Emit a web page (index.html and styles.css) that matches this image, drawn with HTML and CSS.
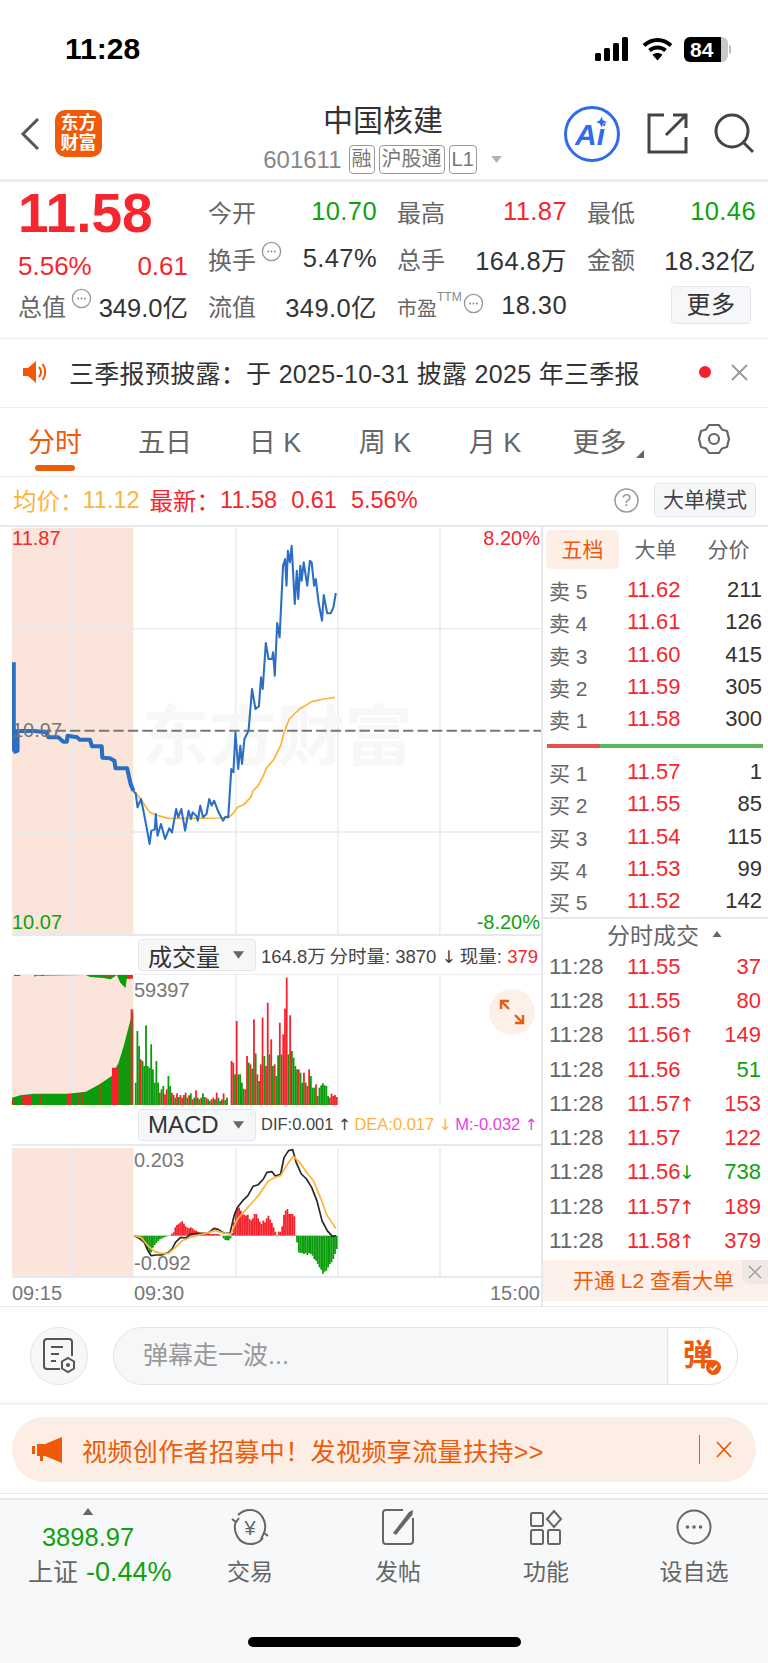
FILE: index.html
```html
<!DOCTYPE html>
<html lang="zh-CN">
<head>
    <meta charset="UTF-8">
    <title>中国核建</title>
    <link rel="stylesheet" href="styles.css">
</head>
<body>
<svg class="defs" width="0" height="0">
    <symbol id="dots" viewBox="0 0 22 22">
        <circle cx="11" cy="11" r="9.5" fill="none" stroke="#999" stroke-width="1.4"/>
        <circle cx="7.5" cy="11" r="1" fill="#888"/><circle cx="11" cy="11" r="1" fill="#888"/><circle cx="14.5" cy="11" r="1" fill="#888"/>
    </symbol>
    <symbol id="caret" viewBox="0 0 12 8"><path d="M0 0H12L6 8Z" fill="#666"/></symbol>
</svg>
<div class="page">
    <!-- 状态栏 -->
    <div class="status">
        <span class="clock">11:28</span>
        <div class="status-icons">
            <svg width="35" height="24" viewBox="0 0 35 24"><rect x="0" y="16" width="6" height="8" rx="1.5"/><rect x="9" y="11" width="6" height="13" rx="1.5"/><rect x="18" y="6" width="6" height="18" rx="1.5"/><rect x="27" y="0" width="6" height="24" rx="1.5"/></svg>
            <svg width="31" height="24" viewBox="0 0 31 24"><path d="M2 8.5C10 1 21 1 29 8.5" fill="none" stroke="#000" stroke-width="4"/><path d="M7.5 13.5C12 9.5 19 9.5 23.5 13.5" fill="none" stroke="#000" stroke-width="4"/><path d="M15.5 23.5L10.5 17.8C13.5 15.5 17.5 15.5 20.5 17.8Z"/></svg>
            <div class="battery">84</div>
            <div class="battery-nub"></div>
        </div>
    </div>

    <!-- 标题栏 -->
    <div class="nav">
        <svg class="back" width="20" height="34" viewBox="0 0 20 34"><path d="M18 2L3 17L18 32" fill="none" stroke="#555" stroke-width="3"/></svg>
        <div class="logo">东方<br>财富</div>
        <div class="nav-title">
            <div class="stock-name">中国核建</div>
            <div class="stock-sub">
                <span class="stock-code">601611</span>
                <span class="tag">融</span><span class="tag">沪股通</span><span class="tag">L1</span>
                <svg class="sub-caret" width="13" height="7"><use href="#caret"/></svg>
            </div>
        </div>
        <div class="nav-actions">
            <svg width="58" height="58" viewBox="0 0 58 58"><circle cx="29" cy="29" r="26.5" fill="none" stroke="#2f6bea" stroke-width="3"/><text x="12" y="40" class="ai-text">Ai</text><path d="M38.500 11L40.300 15.200L44.500 17L40.300 18.800L38.500 23L36.700 18.800L32.500 17L36.700 15.200Z" fill="#2f6bea" stroke="#fff" stroke-width="0.600"/></svg>
            <svg width="41" height="41" viewBox="0 0 41 41"><path d="M17 2H2V39H39V24M26 2H39V15M39 2L19 22" fill="none" stroke="#444" stroke-width="3"/></svg>
            <svg width="41" height="41" viewBox="0 0 41 41"><circle cx="18" cy="18" r="16" fill="none" stroke="#444" stroke-width="3"/><path d="M30 30L39 39" stroke="#444" stroke-width="3"/></svg>
        </div>
    </div>

    <!-- 行情 -->
    <div class="quote">
        <div class="last-price">11.58</div>
        <div class="cell"><span class="lbl">今开</span><span class="green">10.70</span></div>
        <div class="cell"><span class="lbl">最高</span><span class="red">11.87</span></div>
        <div class="cell"><span class="lbl">最低</span><span class="green">10.46</span></div>

        <div class="cell change red"><span>5.56%</span><span>0.61</span></div>
        <div class="cell"><span class="lbl">换手<svg class="tip" width="21" height="21"><use href="#dots"/></svg></span><span>5.47%</span></div>
        <div class="cell"><span class="lbl">总手</span><span>164.8万</span></div>
        <div class="cell"><span class="lbl">金额</span><span>18.32亿</span></div>

        <div class="cell"><span class="lbl">总值<svg class="tip" width="21" height="21"><use href="#dots"/></svg></span><span class="tight">349.0亿</span></div>
        <div class="cell"><span class="lbl">流值</span><span>349.0亿</span></div>
        <div class="cell"><span class="lbl"><small>市盈</small><sup>TTM</sup><svg class="tip tip-ttm" width="21" height="21"><use href="#dots"/></svg></span><span>18.30</span></div>
        <div class="cell more-cell"><span class="more-btn">更多</span></div>
    </div>

    <!-- 公告 -->
    <div class="notice">
        <svg width="26" height="26" viewBox="0 0 26 26"><path d="M1 9H6L14 2V24L6 17H1Z" fill="#f0590a"/><path d="M17 8C19.500 11 19.500 15 17 18M20.500 5C24 10 24 16 20.500 21" fill="none" stroke="#f0590a" stroke-width="2"/></svg>
        <span class="notice-text">三季报预披露：于 2025-10-31 披露 2025 年三季报</span>
        <span class="notice-dot"></span>
        <svg width="17" height="17" viewBox="0 0 17 17"><path d="M1 1L16 16M16 1L1 16" stroke="#999" stroke-width="1.8"/></svg>
    </div>

    <!-- 周期切换 -->
    <div class="tabs">
        <div class="tab active">分时</div>
        <div class="tab">五日</div>
        <div class="tab">日 K</div>
        <div class="tab">周 K</div>
        <div class="tab">月 K</div>
        <div class="tab tab-more">更多<i class="corner"></i></div>
        <div class="tab-gear">
            <svg width="34" height="34" viewBox="0 0 34 34"><path d="M12 3H22L25 7.500L30 9L32 17L30 25L25 26.500L22 31H12L9 26.500L4 25L2 17L4 9L9 7.500Z" fill="none" stroke="#666" stroke-width="2.200" stroke-linejoin="round"/><circle cx="17" cy="17" r="5" fill="none" stroke="#666" stroke-width="2.200"/></svg>
        </div>
    </div>

    <!-- 均价行 -->
    <div class="info">
        <span class="yellow info-avg">均价：</span><span class="yellow info-avg-val">11.12</span>
        <span class="red info-new">最新：</span><span class="red">11.58</span><span class="red">0.61</span><span class="red">5.56%</span>
        <svg class="help" width="25" height="25" viewBox="0 0 25 25"><circle cx="12.500" cy="12.500" r="11.500" fill="none" stroke="#999" stroke-width="1.500"/><text x="12.500" y="18" text-anchor="middle" class="help-text">?</text></svg>
        <span class="mode-btn">大单模式</span>
    </div>

    <div class="market">
        <div class="charts">
            <div class="price-chart">
                <svg class="chart-svg" viewBox="36 24 1534 1221" preserveAspectRatio="none">
                    <rect x="36" y="26" width="352" height="1219" fill="#fbe5da"/>
                    <path d="M36 329H1570M36 939H1570M212 26V1245M685 26V1245M981 26V1245M1277 26V1245" stroke="#e7e9f0" stroke-width="4" fill="none"/>
                    <text x="410" y="722" class="watermark">东方财富</text>
                    <path d="M36 635H1570" stroke="#777" stroke-width="6" stroke-dasharray="30 12" fill="none"/>
                    <polyline class="line-thick" points="41,430 41,690 45,698 52,695 52,636 100,636 135,640 142,655 170,655 185,668 195,668 197,650 225,655 232,662 262,662 268,682 296,682 298,716 320,718 333,725 336,748 370,748 375,772 380,795 388,815"/>
                    <polyline class="line-avg" points="395,820 415,850 435,880 460,890 490,898 520,898 560,898 640,897 665,895 680,880 690,865 708,857 728,835 735,815 750,800 765,770 775,745 795,722 815,680 825,640 840,600 870,570 905,548 940,540 972,535"/>
                    <polyline class="line-price" points="388,815 395,825 400,865 410,840 418,880 428,935 435,975 440,935 450,932 453,885 458,950 468,915 480,960 492,928 500,940 512,870 518,895 527,870 538,935 548,875 555,900 560,880 570,890 575,905 582,860 590,895 600,885 608,840 615,860 622,845 635,880 648,905 655,893 663,895 672,750 678,760 684,640 692,750 698,680 703,735 710,660 722,635 732,510 742,570 752,562 758,475 763,510 772,372 780,420 790,420 793,400 798,470 805,312 812,355 822,140 828,120 832,200 836,95 842,130 847,80 856,255 862,155 866,240 872,140 876,185 882,130 892,200 900,125 905,130 912,200 917,180 925,250 935,305 940,228 950,283 960,283 968,265 975,222"/>
                </svg>
                <span class="axis top-left">11.87</span>
                <span class="axis top-right">8.20%</span>
                <span class="axis mid-left">10.97</span>
                <span class="axis bottom-left">10.07</span>
                <span class="axis bottom-right">-8.20%</span>
            </div>

            <div class="ind-head">
                <div class="ind-select">成交量<svg width="11" height="8"><use href="#caret"/></svg></div>
                <div class="ind-vals vol-vals"><span>164.8万</span><span>分时量: 3870 <i>↓</i></span><span>现量: <b class="red">379</b></span></div>
            </div>
            <div class="vol-chart">
                <svg id="volSvg" class="chart-svg" viewBox="36 137 1534 390" preserveAspectRatio="none">
                    <rect x="36" y="137" width="352" height="390" fill="#fbe5da"/>
                    <path d="M212 137V527M685 137V527M981 137V527M1277 137V527" stroke="#e7e9f0" stroke-width="4" fill="none"/>
                    <path d="M36 527V505L60 498L100 493H200L250 487L290 465L325 440L345 400L360 350L375 290L388 240V527Z" fill="#0a9c0a"/>
                    <path d="M36 527V512H42V527ZM66 527V500H92V527ZM118 527V495H122V527ZM195 527V493H210V527ZM225 527V490H229V527ZM240 527V488H243V527ZM290 527V465H293V527ZM326 527V415H345V527ZM364 527V350H367V527ZM380 527V240H386V527Z" fill="#f5222d"/>
                    <path d="M60 137H100L102 143L106 139L250 137L262 143L300 146L322 150L340 137L350 160L365 176L369 148L386 146V137Z" fill="#0a9c0a"/>
                    <path d="M42 137H60V140H42ZM120 137H128V140H120ZM310 137H320V143H310ZM372 137H386V148H372Z" fill="#f5222d"/>
                </svg>
                <span class="axis vol-max">59397</span>
                <div class="expand-btn">
                    <svg width="26" height="26" viewBox="0 0 26 26"><path d="M2 10V2H10M2 2L10 10M24 16V24H16M24 24L16 16" fill="none" stroke="#f0590a" stroke-width="2.400"/></svg>
                </div>
            </div>

            <div class="ind-head macd-head">
                <div class="ind-select">MACD<svg width="11" height="8"><use href="#caret"/></svg></div>
                <div class="ind-vals macd-vals"><span>DIF:0.001 <i>↑</i></span><span class="yellow">DEA:0.017 <i>↓</i></span><span class="magenta">M:-0.032 <i>↑</i></span></div>
            </div>
            <div class="macd-chart">
                <svg id="macdSvg" class="chart-svg" viewBox="36 141 1534 390" preserveAspectRatio="none">
                    <rect x="36" y="147" width="352" height="384" fill="#fbe5da"/>
                    <path d="M212 147V531M685 147V531M981 147V531M1277 147V531" stroke="#e7e9f0" stroke-width="4" fill="none"/>
                    <g id="macdBars"></g>
                    <polyline class="line-dif" points="390,410 405,418 420,430 430,455 440,470 455,468 470,468 490,460 500,450 510,430 525,415 540,417 555,405 580,403 605,402 622,388 635,392 650,402 668,403 680,350 690,325 705,305 720,290 735,262 750,257 765,240 775,220 790,218 800,232 815,225 825,175 838,155 850,152 860,190 875,225 890,240 905,265 920,305 935,365 950,395 965,412 975,410"/>
                    <polyline class="line-dea" points="390,410 410,415 430,440 450,458 470,463 490,463 510,445 530,425 560,412 590,405 625,395 650,402 670,405 690,360 720,325 750,290 780,245 800,235 815,230 835,195 852,172 870,190 890,220 910,245 930,295 950,350 975,388"/>
                </svg>
                <span class="axis macd-max">0.203</span>
                <span class="axis macd-min">-0.092</span>
            </div>

            <div class="time-axis">
                <span class="t-start">09:15</span><span class="t-open">09:30</span><span class="t-end">15:00</span>
            </div>
        </div>

        <!-- 五档 -->
        <div class="side">
            <div class="side-tabs">
                <span class="side-tab active">五档</span><span class="side-tab">大单</span><span class="side-tab">分价</span>
            </div>
            <div class="book">
                <div class="book-row"><span>卖 5</span><span class="red">11.62</span><b>211</b></div>
                <div class="book-row"><span>卖 4</span><span class="red">11.61</span><b>126</b></div>
                <div class="book-row"><span>卖 3</span><span class="red">11.60</span><b>415</b></div>
                <div class="book-row"><span>卖 2</span><span class="red">11.59</span><b>305</b></div>
                <div class="book-row"><span>卖 1</span><span class="red">11.58</span><b>300</b></div>
            </div>
            <div class="ratio"><div class="ratio-red"></div></div>
            <div class="book book-buy">
                <div class="book-row"><span>买 1</span><span class="red">11.57</span><b>1</b></div>
                <div class="book-row"><span>买 2</span><span class="red">11.55</span><b>85</b></div>
                <div class="book-row"><span>买 3</span><span class="red">11.54</span><b>115</b></div>
                <div class="book-row"><span>买 4</span><span class="red">11.53</span><b>99</b></div>
                <div class="book-row"><span>买 5</span><span class="red">11.52</span><b>142</b></div>
            </div>
            <div class="trade-head">分时成交<svg width="10" height="6" viewBox="0 0 12 8"><path d="M0 8H12L6 0Z" fill="#666"/></svg></div>
            <div class="trades">
                <div class="trade-row"><span>11:28</span><span class="red">11.55</span><i></i><b class="red">37</b></div>
                <div class="trade-row"><span>11:28</span><span class="red">11.55</span><i></i><b class="red">80</b></div>
                <div class="trade-row"><span>11:28</span><span class="red">11.56</span><i class="red">↑</i><b class="red">149</b></div>
                <div class="trade-row"><span>11:28</span><span class="red">11.56</span><i></i><b class="green">51</b></div>
                <div class="trade-row"><span>11:28</span><span class="red">11.57</span><i class="red">↑</i><b class="red">153</b></div>
                <div class="trade-row"><span>11:28</span><span class="red">11.57</span><i></i><b class="red">122</b></div>
                <div class="trade-row"><span>11:28</span><span class="red">11.56</span><i class="green">↓</i><b class="green">738</b></div>
                <div class="trade-row"><span>11:28</span><span class="red">11.57</span><i class="red">↑</i><b class="red">189</b></div>
                <div class="trade-row"><span>11:28</span><span class="red">11.58</span><i class="red">↑</i><b class="red">379</b></div>
            </div>
            <div class="l2">开通 L2 查看大单
                <span class="l2-close"><svg width="14" height="14" viewBox="0 0 14 14"><path d="M1 1L13 13M13 1L1 13" stroke="#999" stroke-width="1.400"/></svg></span>
            </div>
        </div>
    </div>

    <!-- 弹幕 -->
    <div class="comment">
        <div class="comment-icon">
            <svg width="34" height="38" viewBox="0 0 34 38"><path d="M18 32H5Q2 32 2 29V5Q2 2 5 2H27Q30 2 30 5V19" fill="none" stroke="#555" stroke-width="2"/><path d="M9 10H21M9 17H17M9 24H14" stroke="#555" stroke-width="2"/><path d="M26 21L32 24.500V31.500L26 35L20 31.500V24.500Z" fill="#f6f7f9" stroke="#555" stroke-width="2"/><circle cx="26" cy="28" r="2" fill="#555"/></svg>
        </div>
        <div class="comment-box">
            <span class="comment-hint">弹幕走一波...</span>
            <span class="comment-send">弹<svg class="send-check" width="15" height="15" viewBox="0 0 15 15"><circle cx="7.500" cy="7.500" r="7.500" fill="#f0590a"/><path d="M4 7.500L6.500 10L11 5" fill="none" stroke="#fff" stroke-width="1.600"/></svg></span>
        </div>
    </div>

    <!-- 活动横幅 -->
    <div class="promo-wrap">
        <div class="promo">
            <svg width="31" height="26" viewBox="0 0 31 26"><path d="M0 9H3V17H0ZM5 7H13L30 0V26L13 19H11V24H8V19H5Z" fill="#f0590a"/></svg>
            <span class="promo-text">视频创作者招募中！发视频享流量扶持&gt;&gt;</span>
            <span class="promo-sep"></span>
            <svg width="16" height="17" viewBox="0 0 16 17"><path d="M1 1L15 16M15 1L1 16" stroke="#f0590a" stroke-width="1.800"/></svg>
        </div>
    </div>

    <!-- 底部栏 -->
    <div class="footer">
        <div class="foot-tabs">
            <div class="foot-index">
                <svg width="14" height="7" viewBox="0 0 12 8"><path d="M0 8H12L6 0Z" fill="#666"/></svg>
                <div class="idx-val green">3898.97</div>
                <div class="idx-line">上证 <span class="green">-0.44%</span></div>
            </div>
            <div class="foot-tab">
                <svg width="40" height="38" viewBox="0 0 40 38"><path d="M6 13C2 24 9 36 20 36C26 36 30 34 33 30M34 25C38 14 31 2 20 2C15 2 11 4 8 7" fill="none" stroke="#666" stroke-width="2"/><path d="M2 11L6 14L9 10M31 31L34 25L38 28" fill="none" stroke="#666" stroke-width="2"/><text x="20" y="27" text-anchor="middle" class="yen">¥</text></svg>
                <span>交易</span>
            </div>
            <div class="foot-tab">
                <svg width="34" height="38" viewBox="0 0 34 38"><path d="M22 2H5Q2 2 2 5V33Q2 36 5 36H29Q32 36 32 33V10" fill="none" stroke="#666" stroke-width="2"/><path d="M12 25L28 4L32 2L31.500 6.500L15 27Z" fill="#666"/></svg>
                <span>发帖</span>
            </div>
            <div class="foot-tab">
                <svg width="34" height="38" viewBox="0 0 34 38"><rect x="2" y="5" width="12" height="13" rx="1.500" fill="none" stroke="#666" stroke-width="2"/><path d="M25 3L32 11L25 19L18 11Z" fill="none" stroke="#666" stroke-width="2"/><rect x="2" y="22" width="12" height="14" rx="1.500" fill="none" stroke="#666" stroke-width="2"/><rect x="19" y="22" width="12" height="14" rx="1.500" fill="none" stroke="#666" stroke-width="2"/></svg>
                <span>功能</span>
            </div>
            <div class="foot-tab">
                <svg width="36" height="38" viewBox="0 0 36 38"><circle cx="18" cy="19" r="16.500" fill="none" stroke="#666" stroke-width="2"/><circle cx="11.500" cy="19" r="1.800" fill="#666"/><circle cx="18" cy="19" r="1.800" fill="#666"/><circle cx="24.500" cy="19" r="1.800" fill="#666"/></svg>
                <span>设自选</span>
            </div>
        </div>
        <div class="home-bar"></div>
    </div>
</div>
<script src="charts.js"></script>
</body>
</html>
```

FILE: styles.css
```css
* {
    margin: 0;
    padding: 0;
    box-sizing: border-box;
}

body {
    width: 768px;
    height: 1663px;
    overflow: hidden;
    background: #fff;
    color: #333;
    font-family: "Liberation Sans", "Noto Sans CJK SC", sans-serif;
}

.defs {
    position: absolute;
}

.page {
    display: flex;
    flex-direction: column;
    width: 768px;
    height: 1663px;
}

.red { color: #f5262d; }
.green { color: #0ea30e; }
.yellow { color: #fbb53c; }
.magenta { color: #e63fe6; }

/* 状态栏 */
.status {
    height: 92px;
    flex: none;
    display: flex;
    justify-content: space-between;
    align-items: flex-start;
    padding: 31px 37px 0 65px;
}

.clock {
    font-size: 30px;
    line-height: 36px;
    font-weight: 700;
    color: #000;
}

.status-icons {
    display: flex;
    align-items: center;
    height: 36px;
}

.status-icons svg {
    margin-right: 12px;
}

.status-icons svg:nth-child(2) {
    margin-right: 11px;
}

.battery {
    width: 44px;
    height: 25px;
    border-radius: 6px;
    background: linear-gradient(90deg, #000 84%, #c8c8c8 84%);
    color: #fff;
    font-size: 21px;
    line-height: 25px;
    font-weight: 700;
    padding-left: 6px;
}

.battery-nub {
    width: 2px;
    height: 9px;
    margin-left: 1px;
    background: #bbb;
    border-radius: 0 2px 2px 0;
}

/* 标题栏 */
.nav {
    height: 90px;
    flex: none;
    display: flex;
    align-items: center;
    border-bottom: 3px solid #eee;
    padding: 0 13px 4px 20px;
}

.logo {
    width: 47px;
    height: 47px;
    margin-left: 15px;
    border-radius: 10px;
    background: #f05a0a;
    color: #fff;
    font-size: 18px;
    line-height: 20px;
    font-weight: 700;
    text-align: center;
    padding-top: 3px;
}

.nav-title {
    flex: 1;
    text-align: center;
    margin-top: 0;
    padding-right: 34px;
}

.stock-name {
    font-size: 30px;
    line-height: 38px;
    color: #333;
    margin-left: 135px;
}

.stock-sub {
    display: flex;
    align-items: center;
    justify-content: center;
    margin: 5px 0 -8px 135px;
    color: #888;
    font-size: 24px;
    line-height: 29px;
}

.stock-code {
    margin-right: 7px;
}

.tag {
    height: 29px;
    padding: 0 2px;
    margin-right: 4px;
    border: 1px solid #999;
    border-radius: 4px;
    color: #777;
    font-size: 20px;
    line-height: 27px;
}

.sub-caret {
    margin-left: 9px;
    opacity: 0.5;
}

.nav-actions {
    display: flex;
    align-items: center;
    gap: 26px;
}

.ai-text {
    font: italic 700 30px "Liberation Sans", sans-serif;
    fill: #2f6bea;
}

/* 行情 */
.quote {
    height: 157px;
    flex: none;
    display: grid;
    grid-template-columns: 170px 169px 170px 169px;
    grid-auto-rows: 47px;
    column-gap: 20px;
    padding: 5.500px 0 0 18px;
    border-bottom: 1px solid #eee;
    font-size: 25.500px;
    letter-spacing: 0.400px;
    color: #333;
}

.last-price {
    font-size: 55px;
    line-height: 47px;
    font-weight: 700;
    letter-spacing: 0;
    color: #f5262d;
    padding-top: 2px;
}

.cell {
    display: flex;
    justify-content: space-between;
    align-items: center;
    white-space: nowrap;
}

.change {
    padding-top: 16px;
    font-size: 26px;
    letter-spacing: 0;
}

.lbl {
    display: flex;
    align-items: flex-start;
    font-size: 24px;
    letter-spacing: 0;
    color: #666;
}

.lbl small {
    font-size: 20px;
    margin-top: 5px;
}

.lbl sup {
    font-size: 12px;
    line-height: 14px;
    color: #888;
    margin-top: 2px;
}

.tip {
    margin: 0 0 0 5px;
}

.tip-ttm {
    margin: 5px 0 0 1px;
}

.tight {
    letter-spacing: 0;
}

.more-cell {
    justify-content: flex-end;
}

.more-btn {
    width: 80px;
    height: 38px;
    margin-right: 5px;
    border: 1px solid #e5e6ea;
    border-radius: 4px;
    background: #f6f7f9;
    font-size: 24px;
    text-align: center;
    line-height: 36px;
}

/* 公告 */
.notice {
    height: 69px;
    flex: none;
    display: flex;
    align-items: center;
    padding: 0 20px 2px 22px;
    border-bottom: 1px solid #eee;
}

.notice-text {
    flex: 1;
    margin-left: 21px;
    font-size: 25px;
    letter-spacing: 0.300px;
    color: #333;
}

.notice-dot {
    width: 12px;
    height: 12px;
    margin-right: 20px;
    border-radius: 50%;
    background: #f5222d;
}

/* 周期切换 */
.tabs {
    height: 69px;
    flex: none;
    display: flex;
    border-bottom: 1px solid #eee;
}

.tab {
    position: relative;
    width: 110px;
    height: 68px;
    text-align: center;
    font-size: 27px;
    line-height: 70px;
    color: #666;
}

.tab-more {
    padding-right: 11px;
}

.tab.active {
    color: #ee5c0a;
}

.tab.active::after {
    content: "";
    position: absolute;
    left: 35px;
    bottom: 5px;
    width: 40px;
    height: 6px;
    border-radius: 3px;
    background: #ee5c0a;
}

.corner {
    position: absolute;
    left: 86px;
    top: 42px;
    border-left: 8px solid transparent;
    border-bottom: 8px solid #666;
}

.tab-gear {
    flex: 1;
    display: flex;
    align-items: center;
    justify-content: center;
    padding: 0 0 6px 0;
}

/* 均价行 */
.info {
    height: 48px;
    flex: none;
    display: flex;
    align-items: center;
    padding: 0 12px 2px 13px;
    font-size: 23.500px;
    gap: 14px;
}

.info-avg {
    margin-right: -15px;
}

.info-avg-val {
    margin-right: -4px;
}

.info-new {
    margin-right: -14px;
}

.help {
    margin-left: auto;
    margin-right: 1px;
}

.mode-btn {
    width: 102px;
    height: 34px;
    border: 1px solid #e3e5ea;
    border-radius: 4px;
    background: #f6f7f9;
    color: #444;
    font-size: 21px;
    line-height: 32px;
    text-align: center;
}

.help-text {
    font: 17px "Liberation Sans", sans-serif;
    fill: #999;
}

/* 图表区 */
.market {
    height: 782px;
    flex: none;
    display: flex;
    border-top: 2px solid #e7e9f0;
    border-bottom: 1px solid #e7e9f0;
}

.charts {
    width: 529px;
    margin-left: 12px;
    flex: none;
    display: flex;
    flex-direction: column;
}

.price-chart {
    position: relative;
    height: 409px;
    flex: none;
    border-bottom: 2px solid #e7e9f0;
}

.chart-svg {
    display: block;
    width: 100%;
    height: 100%;
}

.line-thick,
.line-price,
.line-avg,
.line-dif,
.line-dea {
    fill: none;
    stroke-linejoin: round;
}

.line-thick { stroke: #2b6fc4; stroke-width: 12; }
.line-price { stroke: #2b6fc4; stroke-width: 6; }
.line-avg { stroke: #fbb53c; stroke-width: 5; }
.line-dif { stroke: #2a2a2a; stroke-width: 5; }
.line-dea { stroke: #fbb53c; stroke-width: 5; }

.watermark {
    font-family: "Noto Sans CJK SC", sans-serif;
    font-size: 197px;
    font-weight: 700;
    fill: #f7f7f7;
}

.axis {
    position: absolute;
    font-size: 20px;
    line-height: 24px;
    color: #777;
}

.top-left { left: 0; top: -1px; }
.top-right { right: 1px; top: -1px; }
.mid-left { left: 0; top: 191px; }
.bottom-left { left: 0; bottom: 0; }
.bottom-right { right: 1px; bottom: 0; }
.axis.top-left, .axis.top-right { color: #f5262d; }
.axis.bottom-left, .axis.bottom-right { color: #0ea30e; }

.ind-head {
    height: 39px;
    flex: none;
    display: flex;
    align-items: center;
    padding: 0 3px 0 126px;
    border-bottom: 1px solid #eee;
}

.ind-select {
    width: 118px;
    height: 32px;
    flex: none;
    display: flex;
    align-items: center;
    justify-content: space-between;
    padding: 0 11px 0 9px;
    border: 1px solid #e3e5ea;
    border-radius: 4px;
    background: #f6f7f9;
    font-size: 24px;
    color: #333;
}

.ind-vals {
    flex: 1;
    display: flex;
    justify-content: space-between;
    margin-left: 5px;
    color: #444;
    white-space: nowrap;
}

.ind-vals i {
    font-family: "DejaVu Sans", sans-serif;
    font-style: normal;
    font-size: 0.95em;
}

.vol-vals {
    font-size: 18.500px;
}

.vol-vals b {
    font-weight: 400;
}

.macd-vals {
    font-size: 16.500px;
}

.macd-head {
    height: 41px;
    border-bottom: 2px solid #e7e9f0;
}

.vol-chart {
    position: relative;
    height: 130px;
    flex: none;
}

.vol-max { left: 122px; top: 3px; }

.expand-btn {
    position: absolute;
    right: 6px;
    top: 14px;
    width: 46px;
    height: 46px;
    border-radius: 50%;
    background: #fdf0e9;
    display: flex;
    align-items: center;
    justify-content: center;
}

.macd-chart {
    position: relative;
    height: 132px;
    flex: none;
    border-bottom: 2px solid #e7e9f0;
}

.macd-max { left: 122px; top: 2px; }
.macd-min { left: 122px; top: 105px; }

.time-axis {
    flex: 1;
    display: flex;
    align-items: center;
    padding-top: 3px;
    font-size: 20px;
    color: #777;
}

.t-start { width: 122px; }
.t-end { margin-left: auto; padding-right: 1px; }

/* 五档 */
.side {
    flex: 1;
    border-left: 2px solid #e7e9f0;
    padding: 3px 0 0;
    display: flex;
    flex-direction: column;
    font-size: 22px;
}

.side-tabs {
    display: flex;
    height: 39px;
    flex: none;
    margin-left: 3px;
}

.side-tab {
    width: 73px;
    border-radius: 5px;
    text-align: center;
    font-size: 21px;
    line-height: 39px;
    color: #666;
}

.side-tab.active {
    background: #fdeee6;
    color: #f0590a;
}

.book {
    flex: none;
    padding-top: 5px;
}

.book-buy {
    padding-top: 3.500px;
}

.book-row,
.trade-row {
    display: grid;
    align-items: center;
    padding-left: 6px;
    color: #666;
}

.book-row {
    height: 32.300px;
    grid-template-columns: 78px 52px 83px;
}

.book-row span:first-child {
    font-size: 21px;
}

.book-row b,
.trade-row b {
    font-weight: 400;
    text-align: right;
}

.book-row b {
    color: #333;
}

.book-row span:nth-child(2),
.trade-row span:nth-child(2) {
    text-align: right;
}

.ratio {
    height: 4px;
    flex: none;
    margin: 9px 5px 4px 4px;
    background: #5cb85c;
}

.ratio-red {
    width: 53px;
    height: 100%;
    background: #e4544f;
}

.trade-head {
    height: 32px;
    flex: none;
    border-top: 2px solid #e7e9f0;
    display: flex;
    align-items: center;
    justify-content: center;
    gap: 13px;
    color: #666;
    font-size: 23px;
    padding-left: 18px;
}

.trades {
    flex: none;
}

.trade-row {
    height: 34.300px;
    grid-template-columns: 78px 52px 14px 68px;
}

.trade-row span:first-child {
    font-size: 22.500px;
    white-space: nowrap;
}

.trade-row i {
    font-family: "DejaVu Sans", sans-serif;
    font-style: normal;
    font-size: 19px;
}

.l2 {
    position: relative;
    height: 41px;
    flex: none;
    margin-top: 2px;
    background: #fdf0ea;
    color: #ee5c0a;
    text-align: center;
    font-size: 21px;
    line-height: 41px;
    padding-right: 4px;
}

.l2-close {
    position: absolute;
    right: 0;
    top: 0;
    width: 26px;
    height: 24px;
    background: #efe8e4;
    border-radius: 0 0 0 8px;
    display: flex;
    align-items: center;
    justify-content: center;
}

/* 弹幕 */
.comment {
    height: 98px;
    flex: none;
    display: flex;
    align-items: center;
    padding: 3px 30px 0;
    gap: 25px;
    border-bottom: 3px solid #f4f4f4;
}

.comment-icon {
    width: 58px;
    height: 58px;
    flex: none;
    display: flex;
    align-items: center;
    justify-content: center;
    border: 1px solid #e3e4e8;
    border-radius: 50%;
    background: #f6f7f9;
}

.comment-box {
    flex: 1;
    height: 58px;
    display: flex;
    border: 1px solid #e3e4e8;
    border-radius: 29px;
    background: linear-gradient(90deg, #f6f7f9 555px, #fff 555px);
    overflow: hidden;
}

.comment-hint {
    flex: 1;
    padding-left: 29px;
    font-size: 25px;
    line-height: 54px;
    color: #999;
}

.comment-send {
    position: relative;
    width: 70px;
    border-left: 1px solid #e3e4e8;
    padding-left: 15px;
    font-size: 30px;
    font-weight: 700;
    line-height: 54px;
    color: #ee5c0a;
}

.send-check {
    position: absolute;
    left: 38px;
    top: 32px;
}

/* 活动横幅 */
.promo-wrap {
    height: 89px;
    flex: none;
    padding: 12px 12px 0;
    border-bottom: 1px solid #e9e9ec;
}

.promo {
    height: 65px;
    display: flex;
    align-items: center;
    padding: 0 24px 0 20px;
    border-radius: 32px;
    background: #fdeee5;
}

.promo-text {
    flex: 1;
    margin-left: 19px;
    font-size: 25px;
    letter-spacing: 0.400px;
    color: #ee5c0a;
}

.promo-sep {
    width: 1px;
    height: 29px;
    margin-right: 16px;
    background: #ee5c0a;
}

/* 底部栏 */
.footer {
    flex: 1;
    margin-top: 4px;
    border-top: 2px solid #e9e9ec;
    background: #f7f8fa;
}

.foot-tabs {
    display: grid;
    grid-template-columns: 176px repeat(4, 148px);
    padding-top: 8px;
}

.foot-tab {
    display: flex;
    flex-direction: column;
    align-items: center;
    font-size: 23px;
    line-height: 30px;
    color: #666;
    gap: 11px;
}

.foot-tab svg {
    display: block;
}

.foot-index {
    text-align: center;
    line-height: 0;
}

.idx-val {
    font-size: 25.500px;
    line-height: 30px;
    margin-top: 7px;
}

.idx-line {
    font-size: 25px;
    line-height: 30px;
    margin-top: 5px;
    padding-left: 28px;
    text-align: left;
    color: #666;
    white-space: nowrap;
}

.idx-line span {
    font-size: 27px;
    margin-left: 1px;
}

.yen {
    font: 20px "Liberation Sans", sans-serif;
    fill: #666;
}

.home-bar {
    width: 273px;
    height: 10px;
    margin: 50px auto 0;
    border-radius: 5px;
    background: #000;
}
```

FILE: charts.js
```js
// 画成交量和MACD柱子
var NS = "http://www.w3.org/2000/svg";
var RED = "#f5222d";
var GREEN = "#0a9c0a";

function addBar(parent, x, y1, y2, w, color) {
    var r = document.createElementNS(NS, "rect");
    r.setAttribute("x", x);
    r.setAttribute("y", Math.min(y1, y2));
    r.setAttribute("width", w);
    r.setAttribute("height", Math.abs(y2 - y1));
    r.setAttribute("fill", color);
    parent.appendChild(r);
}

// 每项形如 r460：r红 g绿，数字是柱顶的y
function drawVol(parent, start, list) {
    var items = list.split(" ");
    for (var i = 0; i < items.length; i++) {
        var color = items[i].charAt(0) == "r" ? RED : GREEN;
        addBar(parent, start + i * 5, +items[i].slice(1), 527, 5.2, color);
    }
}

var vol = document.getElementById("volSvg");
drawVol(vol, 392, "g460 g305 g350 r390 g395 g410 g288 g410 g415 g345 g420 g460 g395 g460 r490 g480 g470 r495 r480 g440 g470 r490 " +
    "r497 g505 r492 g503 r497 r505 g497 r490 g505 r498 g492 r510 g505 r483 g505 g510 r505 g492 g503 r505 g510 g515 r510 r505 g510 r490 g505 g515 r510 r492 g512 g505");
drawVol(vol, 670, "r395 r400 g435 r275 g435 g435 g460 g478 r480 r380 g400 r405 g418 r270 g372 r435 g455 r405 r265 g380 r410 r220 g375 r330 g410 r405 g440 g378 r280 g375 r315 r238 r145 g375 r258 g365 g385 g410 g420 r420 g430 g460 r430 g460 r470 r420 g440 g475 g475 r465 g500 g475 g468 g462 g468 g470 g500 r505 r493 r500 r497 r503");

// MACD 柱子
var macd = document.getElementById("macdBars");
var zero = 410;
var bars = [[392, 411], [397, 412], [402, 414], [407, 416], [412, 424], [417, 432], [422, 440], [427, 452], [432, 462], [437, 460], [442, 446], [447, 438], [452, 432], [457, 426], [462, 421], [467, 419], [472, 416], [477, 414], [482, 412], [487, 411],
    [492, 409], [497, 405], [502, 400], [507, 385], [512, 378], [517, 374], [522, 370], [527, 367], [532, 374], [537, 382], [542, 386], [547, 388], [552, 385], [557, 388], [562, 393], [567, 395], [572, 398], [577, 401], [582, 403], [587, 405], [592, 405], [597, 405], [602, 405], [607, 405], [612, 405], [617, 405], [622, 405], [627, 405], [632, 405], [637, 408],
    [647, 418], [652, 423], [657, 424], [662, 424], [667, 418],
    [672, 402], [677, 370], [682, 338], [687, 328], [692, 326], [697, 335], [702, 345], [707, 347], [712, 350], [717, 347], [722, 360], [727, 364], [732, 358], [737, 345], [742, 345], [747, 358], [752, 368], [757, 375], [762, 365], [767, 370], [772, 358], [777, 350], [782, 362], [787, 372], [792, 385], [797, 398], [802, 412], [807, 398], [812, 398], [817, 382], [822, 348], [827, 335], [832, 330], [837, 345], [842, 345], [847, 345], [852, 352], [857, 408],
    [860, 430], [865, 460], [870, 462], [875, 462], [880, 465], [885, 462], [890, 468], [895, 462], [900, 465], [905, 470], [910, 480], [915, 485], [920, 495], [925, 505], [930, 512], [935, 524], [940, 518], [945, 515], [950, 505], [955, 495], [960, 490], [965, 480], [970, 465], [975, 450]];
for (var i = 0; i < bars.length; i++) {
    addBar(macd, bars[i][0], zero, bars[i][1], 5.2, bars[i][1] < zero ? RED : GREEN);
}
```
